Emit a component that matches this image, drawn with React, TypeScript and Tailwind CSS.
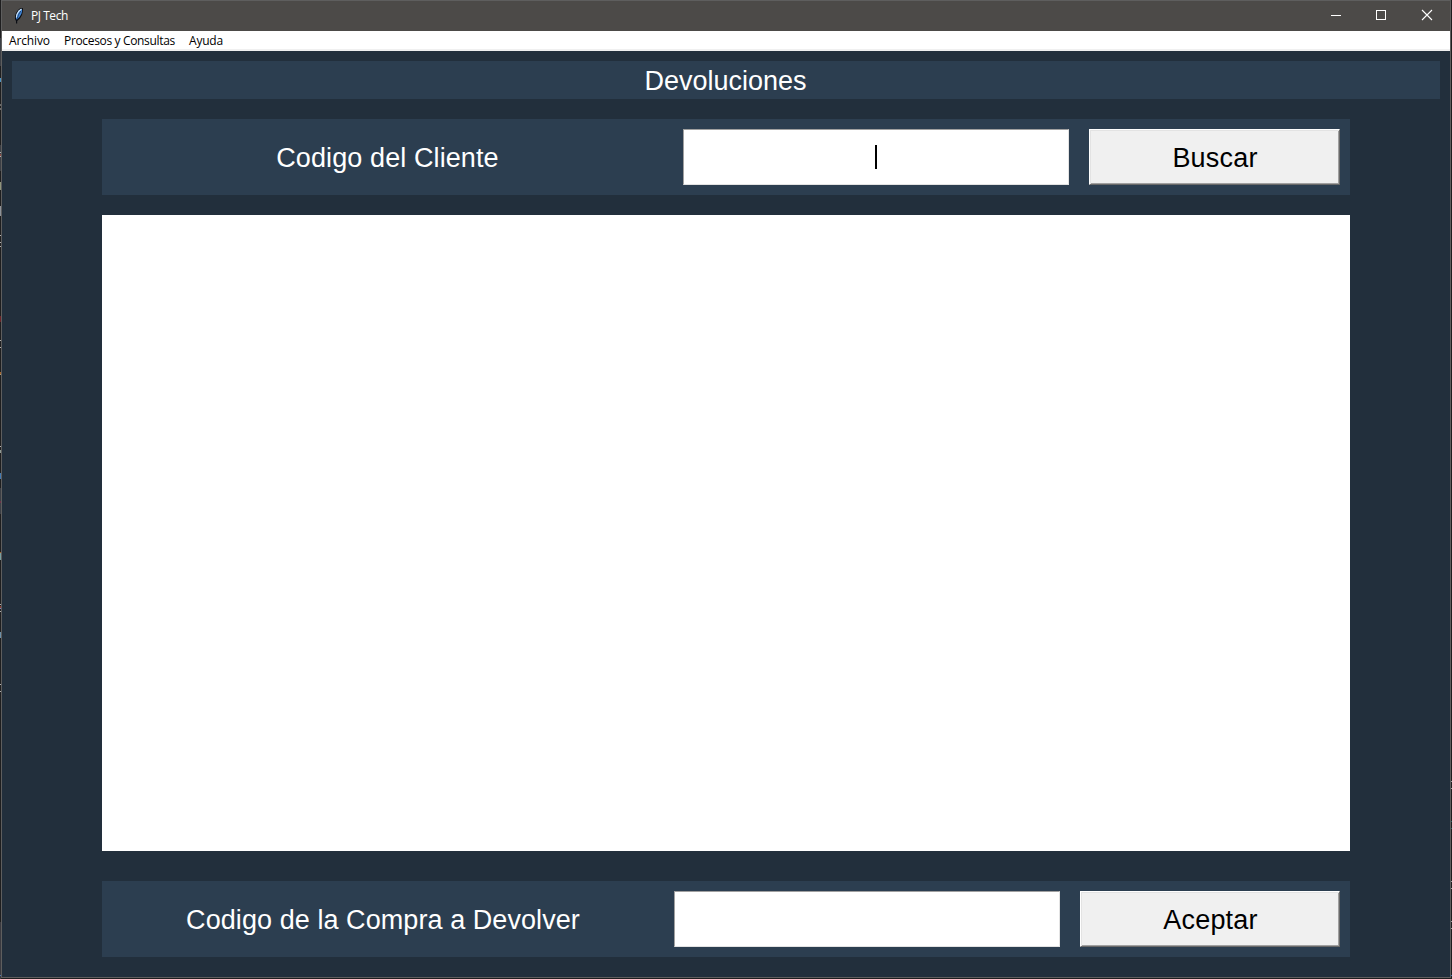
type Mark = { top: number; height: number; color: string };

const leftMarks: Mark[] = [
  { top: 38, height: 28, color: "#3c3f45" },
  { top: 78, height: 4, color: "#4c94c4" },
  { top: 104, height: 2, color: "#6b6b6b" },
  { top: 108, height: 2, color: "#6b6b6b" },
  { top: 145, height: 26, color: "#3c3f45" },
  { top: 152, height: 1, color: "#b0b0b0" },
  { top: 154, height: 2, color: "#8a4a44" },
  { top: 156, height: 1, color: "#b0b0b0" },
  { top: 182, height: 8, color: "#8f957c" },
  { top: 206, height: 10, color: "#8e9298" },
  { top: 235, height: 1, color: "#b0b0b0" },
  { top: 242, height: 1, color: "#b0b0b0" },
  { top: 246, height: 1, color: "#b0b0b0" },
  { top: 316, height: 6, color: "#6b2328" },
  { top: 340, height: 1, color: "#b0b0b0" },
  { top: 347, height: 1, color: "#b0b0b0" },
  { top: 372, height: 2, color: "#a5642c" },
  { top: 374, height: 1, color: "#b09a70" },
  { top: 446, height: 1, color: "#b0b0b0" },
  { top: 450, height: 3, color: "#8f9a94" },
  { top: 473, height: 6, color: "#447ab0" },
  { top: 488, height: 26, color: "#3c3f45" },
  { top: 501, height: 2, color: "#6b3048" },
  { top: 552, height: 1, color: "#a5642c" },
  { top: 553, height: 7, color: "#78a0a0" },
  { top: 604, height: 1, color: "#b0b0b0" },
  { top: 606, height: 2, color: "#8a3a30" },
  { top: 608, height: 1, color: "#8088b8" },
  { top: 611, height: 1, color: "#b0b0b0" },
  { top: 632, height: 6, color: "#6c90a8" },
  { top: 684, height: 1, color: "#b0b0b0" },
  { top: 691, height: 1, color: "#b0b0b0" },
  { top: 922, height: 57, color: "#3a3a40" },
  { top: 975, height: 1, color: "#4878b0" },
];

const rightMarks: Mark[] = [
  { top: 781, height: 1, color: "#a0a0a0" },
  { top: 788, height: 1, color: "#a0a0a0" },
  { top: 821, height: 1, color: "#2f5f62" },
  { top: 828, height: 1, color: "#2f5f62" },
  { top: 881, height: 1, color: "#a0a0a0" },
  { top: 888, height: 1, color: "#a0a0a0" },
  { top: 921, height: 1, color: "#a0a0a0" },
  { top: 928, height: 1, color: "#a0a0a0" },
  { top: 975, height: 1, color: "#4878b0" },
];

function Edge({ marks }: { marks: Mark[] }) {
  return (
    <div className="relative w-px shrink-0 bg-[#1e1e1f]">
      {marks.map((m) => (
        <span
          key={`${m.top}-${m.color}`}
          className="absolute left-0 w-px"
          style={{ top: m.top, height: m.height, background: m.color }}
        />
      ))}
    </div>
  );
}

function Feather() {
  return (
    <svg width="16" height="16" viewBox="0 0 16 16" className="shrink-0">
      <path d="M10.500 0H8.500L6 2 4 5 3 8v3l1 2v2.500h1.200V13L8 10.500 10 7l1-4V.5z" fill="#0b0e14" />
      <path d="M9.800.8L7 2.500 5 5.500 4 9v2l1 .5L7.500 9 9.300 6l.9-3z" fill="#3f86d8" />
      <path d="M9.500 1L6.800 3.200 4.900 6.500 4.400 9.500" stroke="#cfe6fa" strokeWidth="1.200" fill="none" />
      <path d="M8.800 3L6.600 6.500 5 11" stroke="#173158" strokeWidth=".7" fill="none" />
    </svg>
  );
}

function TitleBar() {
  return (
    <header className="flex h-[30px] shrink-0 items-center bg-[#4c4a48] text-white">
      <div className="flex flex-1 items-center pl-2.5">
        <Feather />
        <span className="ml-[3px] text-[12px] leading-4 tracking-[-0.45px]">PJ Tech</span>
      </div>
      <svg width="137" height="30" viewBox="0 0 137 30" fill="none" stroke="#fff" shapeRendering="crispEdges">
        <path d="M18 14.500h10" />
        <rect x="63.500" y="9.500" width="9" height="9" />
        <path d="M109 9l10 10M119 9l-10 10" strokeWidth="1.100" shapeRendering="auto" />
      </svg>
    </header>
  );
}

function MenuBar() {
  return (
    <nav className="flex h-5 shrink-0 items-center gap-3.5 border-b-2 border-[#f0f0f0] bg-white pt-0.5 pl-[7px] text-[12px] leading-4 text-black">
      <span className="w-[41px] whitespace-nowrap tracking-[-0.15px]">Archivo</span>
      <span className="w-[111px] whitespace-nowrap tracking-[-0.34px]">Procesos y Consultas</span>
      <span className="whitespace-nowrap tracking-[-0.2px]">Ayuda</span>
    </nav>
  );
}

const bevel =
  "h-14 shrink-0 border border-t-white border-l-white border-r-[#696969] border-b-[#696969] bg-[#f0f0f0] pt-0.5 pl-px text-black tracking-[0.2px] shadow-[inset_1px_1px_0_#e3e3e3,inset_-1px_-1px_0_#a0a0a0]";
const field =
  "flex h-14 w-[386px] shrink-0 items-center justify-center border border-t-[#a0a0a0] border-l-[#a0a0a0] border-r-[#e3e3e3] border-b-[#e3e3e3] bg-white";

export default function App() {
  return (
    <div className="flex h-[979px] w-[1452px] overflow-hidden bg-[#1e1e1f] font-['Open_Sans','Noto_Sans',sans-serif]">
      <Edge marks={leftMarks} />
      <div className="flex h-[978px] flex-1 flex-col border border-[#5e5e5e]">
        <TitleBar />
        <MenuBar />
        <main className="flex flex-1 flex-col bg-[#222f3c] px-2.5 pt-2.5 font-['Liberation_Sans',Arial,sans-serif] text-[27px] leading-[38px] text-white">
          <h1 className="h-[38px] bg-[#2c3e50] pr-px text-center leading-10">Devoluciones</h1>
          <div className="mx-[90px] mt-5 flex h-[76px] items-center gap-5 bg-[#2c3e50] pr-2.5">
            <label className="-mr-2.5 flex-1 pt-0.5 text-center tracking-[0.1px]">Codigo del Cliente</label>
            <div className={field}>
              <span className="h-6 w-0.5 bg-black" />
            </div>
            <button className={`${bevel} w-[251px]`}>Buscar</button>
          </div>
          <section className="mx-[90px] mt-5 h-[636px] bg-white" />
          <div className="mx-[90px] mt-[30px] flex h-[76px] items-center gap-5 bg-[#2c3e50] pr-2.5">
            <label className="-mr-2.5 flex-1 pt-0.5 text-center tracking-[0.07px]">Codigo de la Compra a Devolver</label>
            <div className={field} />
            <button className={`${bevel} w-[260px]`}>Aceptar</button>
          </div>
        </main>
      </div>
      <Edge marks={rightMarks} />
    </div>
  );
}
